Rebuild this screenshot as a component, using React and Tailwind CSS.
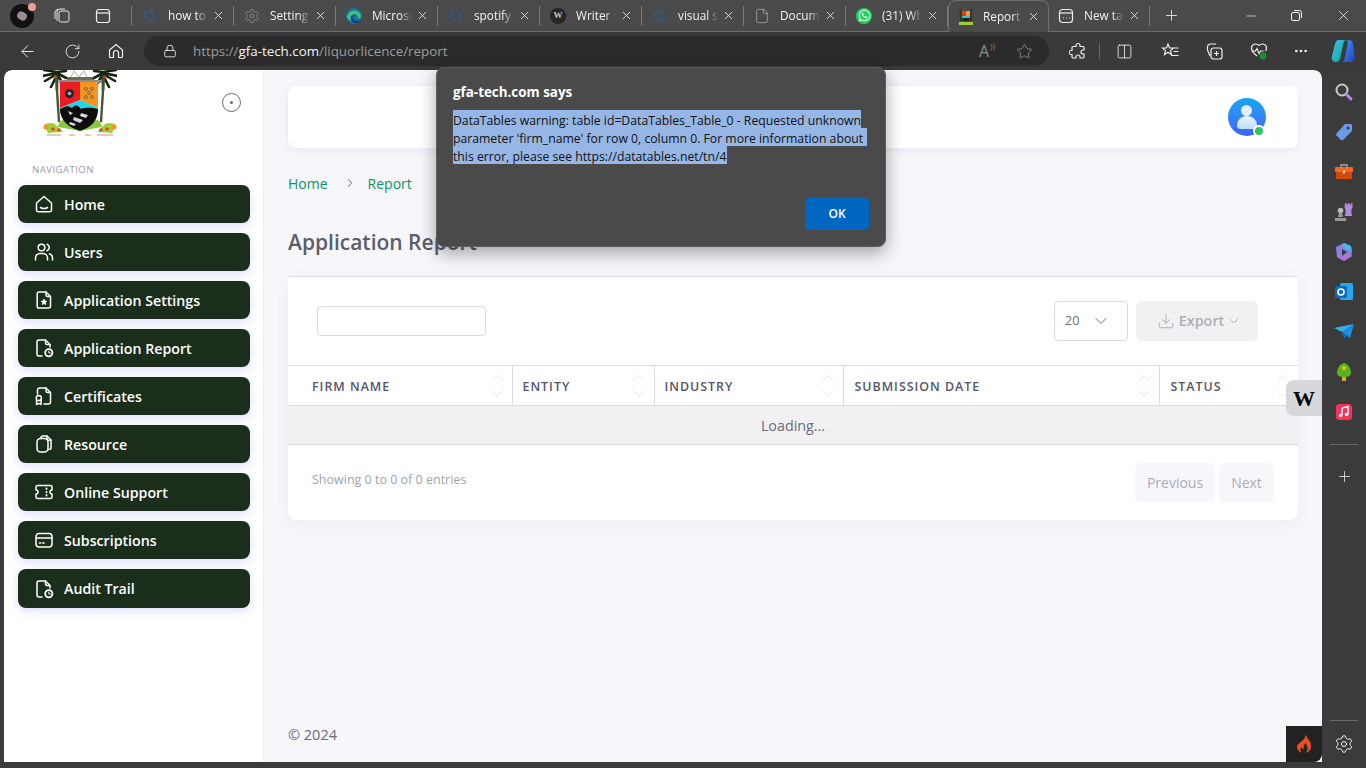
import React from "react";
import {
  ArrowLeft,
  RotateCw,
  Lock,
  Star,
  Columns2,
  X,
  Plus,
  Minus,
  Settings,
  Search,
  File,
  ChevronDown,
  ChevronUp,
  ChevronRight,
  Download,
  MoreHorizontal,
} from "lucide-react";
import { FaWhatsapp } from "react-icons/fa";

const Line = ({ children, size = 20, className = "" }) => (
  <svg
    width={size}
    height={size}
    viewBox="0 0 20 20"
    fill="none"
    stroke="currentColor"
    strokeWidth="1.5"
    strokeLinecap="round"
    strokeLinejoin="round"
    className={className}
  >
    {children}
  </svg>
);

const navIcons = {
  home: (
    <>
      <path d="M2.5 9 10 2.5 17.5 9v7a1.8 1.8 0 0 1-1.8 1.8H4.3A1.8 1.8 0 0 1 2.5 16z" />
      <path d="M6.5 13.5c2 1.2 5 1.2 7 0" />
    </>
  ),
  users: (
    <>
      <circle cx="7.5" cy="5.5" r="3.3" />
      <path d="M1.5 18v-2a4.5 4.5 0 0 1 4.5-4.5h3a4.5 4.5 0 0 1 4.5 4.5v2" />
      <path d="M13 2.3a3.4 3.4 0 0 1 0 6.4" />
      <path d="M15.5 11.8a4.3 4.3 0 0 1 3 4.2v2" />
    </>
  ),
  settings: (
    <>
      <path d="M5 2h7l4.5 4.5V16a2 2 0 0 1-2 2H5a1.8 1.8 0 0 1-1.8-1.8V3.8A1.8 1.8 0 0 1 5 2z" />
      <path d="M12 2v3a1.5 1.5 0 0 0 1.5 1.5h3" />
      <path d="m10 9.3.9 1.7 1.9.3-1.4 1.3.4 1.9-1.8-.9-1.8.9.4-1.9-1.4-1.3 1.9-.3z" fill="currentColor" strokeWidth="0.8" />
    </>
  ),
  report: (
    <>
      <path d="M8 18H5a2 2 0 0 1-2-2V4a2 2 0 0 1 2-2h6.5L16 6.5V9" />
      <path d="M11.5 2v3A1.5 1.5 0 0 0 13 6.5h3" />
      <circle cx="14.8" cy="14.8" r="3.6" strokeWidth="1.8" />
      <path d="M14.8 13.2v1.8h1.6" strokeWidth="1" />
    </>
  ),
  cert: (
    <>
      <path d="M3.5 8V4a2 2 0 0 1 2-2h6.5L16.5 6.5V16a2 2 0 0 1-2 2H10" />
      <path d="M12 2v3a1.5 1.5 0 0 0 1.5 1.5h3" />
      <circle cx="4.8" cy="12" r="2.6" />
      <path d="M2.5 14.5V18.5l2.3-1.2 2.3 1.2v-4" />
    </>
  ),
  copy: (
    <>
      <path d="M7 4.5V4a2 2 0 0 1 2-2h4l4 4v7.5a2 2 0 0 1-2 2h-1" />
      <path d="M13 2v3a1.2 1.2 0 0 0 1.2 1.2H17" />
      <rect x="3" y="4.5" width="11" height="13.5" rx="3.5" />
    </>
  ),
  ticket: (
    <>
      <path d="M3.5 3.5h13a1.5 1.5 0 0 1 1.5 1.5v3a2 2 0 0 0 0 4v3a1.5 1.5 0 0 1-1.5 1.5h-13A1.5 1.5 0 0 1 2 15v-3a2 2 0 0 0 0-4V5a1.5 1.5 0 0 1 1.5-1.5z" />
      <path d="M12.5 6.5v.5M12.5 9.8v.5M12.5 13v.5" strokeWidth="1.8" />
    </>
  ),
  card: (
    <>
      <rect x="2" y="3.5" width="16" height="13.5" rx="3" />
      <path d="M2 8h16" />
      <path d="M5.5 13h1.2M8.8 13H10" strokeWidth="1.6" />
    </>
  ),
};

const navItems = [
  ["Home", "home"],
  ["Users", "users"],
  ["Application Settings", "settings"],
  ["Application Report", "report"],
  ["Certificates", "cert"],
  ["Resource", "copy"],
  ["Online Support", "ticket"],
  ["Subscriptions", "card"],
  ["Audit Trail", "report"],
];

const EdgeIcon = () => (
  <svg width="16" height="16" viewBox="0 0 16 16">
    <circle cx="8" cy="8" r="8" fill="#1b6fa8" />
    <path d="M1 9c1-5 5-7 8-6.500 3 .5 6 3 6 6 0 1.500-2 2-3.500 1.500C13 8 10 5.500 7 6.500 4.500 7.300 4 10 5.500 12.500 3 12.500 1.500 11 1 9z" fill="#3ec27c" />
    <path d="M5 8.500c-1 3 1.500 7 6 6.500 1.500-.3 3-1.500 4-3-2 1.500-6 1.500-7.500-.5C6.500 10.500 6 9.500 7 7.500 6 7.500 5.300 7.800 5 8.500z" fill="#0c3f7a" />
  </svg>
);

const WIcon = () => (
  <div className="w-4 h-4 rounded-full bg-[#262626] flex items-center justify-center text-[9px] font-bold text-[#c8c8c8] [font-family:'Liberation_Serif',serif]">
    W
  </div>
);

const MiniCrest = () => (
  <svg width="16" height="18" viewBox="0 0 16 18">
    <path d="M2 1c1 1 1 3 1 12M14 1c-1 1-1 3-1 12" stroke="#2c3a1e" strokeWidth="2" />
    <path d="M4 3h4v5H4z" fill="#e5332a" />
    <path d="M8 3h4v5H8z" fill="#f3982b" />
    <path d="M4 8h8v2l-4 3-4-3z" fill="#27c6d8" />
    <path d="M4 10h8l-1 3H5z" fill="#222" />
    <path d="M1 14h14v3H1z" fill="#9acb3c" />
  </svg>
);

const tabs = [
  { title: "how to", icon: <Search size={14} className="text-[#2c5d8f]" strokeWidth={2.4} /> },
  { title: "Settings", icon: <Settings size={16} className="text-[#8c8c8c]" strokeWidth={1.4} /> },
  { title: "Microsoft", icon: <EdgeIcon /> },
  { title: "spotify", icon: <Search size={14} className="text-[#2c5d8f]" strokeWidth={2.4} /> },
  { title: "Writer C", icon: <WIcon /> },
  { title: "visual st", icon: <Search size={14} className="text-[#2c5d8f]" strokeWidth={2.4} /> },
  { title: "Document", icon: <File size={16} className="text-[#a8a8a8]" strokeWidth={1.2} /> },
  { title: "(31) What", icon: <div className="w-4 h-4 rounded-full bg-[#1fd15f] flex items-center justify-center text-white"><FaWhatsapp size={13} /></div> },
];

const Tab = ({ title, icon, active, narrow }) => (
  <div
    className={`h-[32px] flex items-center shrink-0 relative ${
      active
        ? "w-[101px] pl-[9px] border border-b-0 border-[#6e6e6e] rounded-t-lg bg-[#4a4a4a] z-10"
        : narrow
        ? "w-[101px] pl-[9px] border-b border-[#6e6e6e]"
        : "w-[102px] pl-[10px] border-b border-[#6e6e6e]"
    }`}
  >
    <div className="w-4 flex justify-center shrink-0">{icon}</div>
    <div
      className={`${active ? "ml-[9px]" : "ml-[10px]"} w-[40px] pt-[1px] overflow-hidden whitespace-nowrap text-[11.8px] text-[#f2f2f2] [mask-image:linear-gradient(90deg,#000_72%,transparent)]`}
    >
      {title}
    </div>
    <X size={13} strokeWidth={1.5} className="ml-[4px] text-[#f0f0f0] shrink-0" />
    {!active && <div className="absolute right-0 top-[6px] h-[20px] w-px bg-[#7b7b7b]" />}
  </div>
);

const TopBars = () => (
  <>
    <div className="h-[32px] bg-[#4a4a4a] flex items-stretch shrink-0">
      <div className="w-[132px] flex items-center border-b border-[#6e6e6e] shrink-0 relative">
        <div className="ml-[10px] w-[24px] h-[24px] rounded-full bg-[#111] relative flex items-center justify-center">
          <div className="w-[10px] h-[8px] rounded-sm bg-[#9a8f8f] rotate-[30deg]" />
          <div className="absolute -top-[1px] -right-[2px] w-[8px] h-[8px] rounded-full bg-[#f29b9b]" />
        </div>
        <svg width="18" height="18" viewBox="0 0 18 18" fill="none" stroke="#e6e6e6" strokeWidth="1" className="ml-[19px]">
          <rect x="6" y="4" width="10" height="11" rx="2" />
          <path d="M4 14V5a3 3 0 0 1 3-3h5M2 12V5a5 5 0 0 1 3-3" />
        </svg>
        <svg width="16" height="16" viewBox="0 0 16 16" fill="none" stroke="#f0f0f0" strokeWidth="1.2" className="ml-[24px]">
          <rect x="1.500" y="1.500" width="13" height="13" rx="2.500" />
          <path d="M1.500 5h13" />
        </svg>
        <div className="absolute right-0 top-[6px] h-[20px] w-px bg-[#7b7b7b]" />
      </div>
      {tabs.map((t) => (
        <Tab key={t.title} {...t} />
      ))}
      <Tab title="Report" active icon={<MiniCrest />} />
      <Tab
        title="New tab"
        narrow
        icon={
          <svg width="16" height="16" viewBox="0 0 16 16" fill="none" stroke="#ececec" strokeWidth="1.2">
            <rect x="1.500" y="1.500" width="13" height="13" rx="3" />
            <path d="M1.500 5h13" />
            <path d="M5 10h.6M8 10h.6M11 10h.6" strokeWidth="1.400" />
          </svg>
        }
      />
      <div className="flex-1 border-b border-[#6e6e6e] flex items-center text-[#f2f2f2]">
        <Plus size={17} strokeWidth={1.2} className="ml-[13px]" />
        <Minus size={14} strokeWidth={1.2} className="ml-[64px]" />
        <svg width="11" height="11" viewBox="0 0 11 11" fill="none" stroke="#f2f2f2" className="ml-[33px]">
          <rect x="0.500" y="2.500" width="8" height="8" rx="1.500" />
          <path d="M3 .5h5.500a2 2 0 0 1 2 2V8" />
        </svg>
        <X size={17} strokeWidth={1.100} className="ml-[33px]" />
      </div>
    </div>

    <div className="h-[38px] bg-[#3a3a3a] flex items-center shrink-0 text-[#f0f0f0]">
      <ArrowLeft size={19} strokeWidth={1.2} className="ml-[18px]" />
      <RotateCw size={17} strokeWidth={1.2} className="ml-[27px]" />
      <svg width="16" height="16" viewBox="0 0 16 16" fill="none" stroke="#f0f0f0" strokeWidth="1.200" className="ml-[27px]">
        <path d="M1.500 7 8 1.500 14.500 7v6.500a1 1 0 0 1-1 1H10.500V10a2.500 2.500 0 0 0-5 0v4.500H2.500a1 1 0 0 1-1-1z" />
      </svg>
      <div className="ml-[20px] w-[905px] h-[30px] rounded-full bg-[#2b2b2b] flex items-center">
        <Lock size={14} strokeWidth={1.500} className="ml-[19px] text-[#ededed]" />
        <div className="ml-[16px] text-[13.35px] text-[#9d9d9d] whitespace-nowrap">
          https://<span className="text-[#f4f4f4]">gfa-tech.com</span>/liquorlicence/report
        </div>
        <div className="ml-auto flex items-center text-[#8d8d8d]">
          <div className="relative text-[16px] leading-none mr-[27px]">
            A<span className="absolute -right-[6px] -top-[1px] text-[8px]">))</span>
          </div>
          <Star size={17} strokeWidth={1.200} className="mr-[16px]" />
        </div>
      </div>
      <svg width="18" height="18" viewBox="0 0 18 18" fill="none" stroke="#f0f0f0" strokeWidth="1.200" className="ml-[20px]">
        <path d="M7 3.500a2 2 0 0 1 4 0V4.500h3a1 1 0 0 1 1 1V8h-1a2 2 0 0 0 0 4h1v3a1 1 0 0 1-1 1h-3v-1a2 2 0 0 0-4 0v1H4a1 1 0 0 1-1-1v-2.500H2a2 2 0 0 1 0-4h1V5.500a1 1 0 0 1 1-1h3z" />
      </svg>
      <div className="ml-[12px] w-px h-[16px] bg-[#666]" />
      <Columns2 size={17} strokeWidth={1.200} className="ml-[16px]" />
      <svg width="18" height="18" viewBox="0 0 18 18" fill="none" stroke="#f0f0f0" strokeWidth="1.100" className="ml-[28px]">
        <path d="M7 2l1.500 4h4L9.500 8.700l1 4-3.500-2.500L3.500 12.700l1-4L1.500 6h4z" />
        <path d="M13 6h4.500M12.500 9.500h5M10 13.500h7.500" />
      </svg>
      <svg width="18" height="18" viewBox="0 0 18 18" fill="none" stroke="#f0f0f0" strokeWidth="1.200" className="ml-[26px]">
        <path d="M5 14 2.500 8V5a3 3 0 0 1 3-3H11" />
        <rect x="6" y="6" width="11" height="11" rx="2.500" />
        <path d="M11.500 9v5M9 11.500h5" />
      </svg>
      <svg width="18" height="18" viewBox="0 0 18 18" fill="none" className="ml-[27px]">
        <path d="M9 3.500C6 .5 1.500 2.500 1.500 6c0 3 3 6 5.500 8M9 3.500c3-3 7.500-1 7.500 2.500 0 1-.3 2-1 3" stroke="#f0f0f0" strokeWidth="1.200" />
        <path d="M1.500 9h4l1.500-2.500 2 5L10.500 9h3" stroke="#f0f0f0" strokeWidth="1.100" />
        <circle cx="13" cy="14" r="3.500" fill="#1a8f3c" />
      </svg>
      <MoreHorizontal size={16} className="ml-[25px]" strokeWidth={2} />
      <svg width="24" height="24" viewBox="0 0 24 24" className="ml-[22px]">
        <defs>
          <linearGradient id="cop1" x1="0" y1="0" x2="1" y2="1">
            <stop offset="0" stopColor="#35c5ea" />
            <stop offset="1" stopColor="#1c9f8e" />
          </linearGradient>
          <linearGradient id="cop2" x1="0" y1="0" x2="1" y2="1">
            <stop offset="0" stopColor="#3fa0f5" />
            <stop offset="1" stopColor="#2440c8" />
          </linearGradient>
        </defs>
        <path d="M8 1h8c-2 0-3 1-3.500 3L9 20c-.5 2-2 3-4 3-3 0-5-3-4-6l3-12c.5-2.500 2-4 4-4z" fill="url(#cop1)" />
        <path d="M16 1h2c2 0 3.500 1.500 4 4l1.500 12c.5 3-1 6-3.500 6h-10c2 0 3-1 3.500-3l3-14c.3-2 .5-3-.5-5z" fill="url(#cop2)" />
      </svg>
    </div>
  </>
);

const Palm = ({ x, flip }) => (
  <g transform={`translate(${x} 0) scale(${flip ? -1 : 1} 1)`}>
    <path d="M0 2-13 0M0 3-15 6M0 4-12 11M0 5-6 17M0 5 0 20M0 4 6 14M0 3 9 8M0 2 9 1" stroke="#17240f" strokeWidth="2.600" strokeLinecap="round" />
    <path d="M-1 5 2 52" stroke="#4a5638" strokeWidth="2.400" />
    <circle cx="-2" cy="7" r="1.500" fill={flip ? "#d0342c" : "#a85a20"} />
  </g>
);

const Crest = () => (
  <svg width="74" height="66" viewBox="0 0 74 66">
    <path d="M27 9 31 1l5 6 5-6 4 8" fill="none" stroke="#c4c4c4" strokeWidth="1.200" />
    <path d="M24 7h27v3H24z" fill="#6b6b55" />
    <Palm x={14} />
    <Palm x={60} flip />
    <path d="M15 57c1-6 5-9 10-7l12 6 12-6c5-2 9 1 10 7l-22 4z" fill="#8dc63f" />
    <path d="M16 10h43v3H16z" fill="#8b8b8b" />
    <path d="M17 12h20v18l-20 8z" fill="#ed1c24" />
    <path d="M37 12h18v26l-18-8z" fill="#f7941d" />
    <circle cx="26.500" cy="23.500" r="4.500" fill="#222" />
    <circle cx="26.500" cy="23.500" r="1.800" fill="#aaa" />
    <g fill="none" stroke="#7a6a4a" strokeWidth="1">
      <circle cx="43" cy="19" r="1.500" />
      <circle cx="49" cy="19" r="1.500" />
      <circle cx="46" cy="23" r="1.500" />
      <circle cx="43" cy="27" r="1.500" />
      <circle cx="49" cy="27" r="1.500" />
    </g>
    <path d="M37 30 55 38v5H17v-5z" fill="#1fd6e6" />
    <path d="M17 39c6-3 8-4 12-1 3-4 6-3 9 1 5-2 12-1 17 0 0 11-6 18-18 22-12-4-20-11-20-22z" fill="#0d0d0d" />
    <path d="M25 41l5 2-3 2zM31 47l9 3-3 3-7-3zM38 43l7 2-2 3-6-2zM27 52l6 2-2 2-5-2z" fill="#d8d8d8" />
    <path d="M1 55c3-2 7-3 11-1l8 8-15 1zM73 55c-3-2-7-3-11-1l-8 8 15 1z" fill="#9ad13a" />
    <g fill="#e8402a">
      <circle cx="10" cy="59" r="1.700" />
      <circle cx="16" cy="60" r="1.700" />
      <circle cx="58" cy="60" r="1.700" />
      <circle cx="64" cy="59" r="1.700" />
    </g>
    <circle cx="3" cy="57" r="2.600" fill="#f7941d" />
    <circle cx="71" cy="57" r="2.600" fill="#f7941d" />
    <path d="M4 65h14M26 65h6M42 65h6M54 65h16" stroke="#e4b4b4" strokeWidth="1.600" />
  </svg>
);

const Sidebar = () => (
  <aside className="w-[260px] bg-white border-r border-[#eeeef3] rounded-tl-lg shrink-0">
    <div className="h-[90px] relative">
      <div className="pl-[39px]">
        <Crest />
      </div>
      <div className="absolute left-[218px] top-[23px] w-[19px] h-[19px] rounded-full border-[1.5px] border-[#6a6a78] flex items-center justify-center">
        <div className="w-[3px] h-[3px] rounded-full bg-[#6a6a78]" />
      </div>
    </div>
    <div className="h-[18px] pl-[28px] text-[9.7px] leading-[20px] tracking-[0.4px] text-[#9a9aa6]">NAVIGATION</div>
    <nav className="mt-[7px] ml-[14px] mr-[13px] flex flex-col gap-[10px]">
      {navItems.map(([label, icon]) => (
        <div
          key={label}
          className="h-[38px] last:h-[39px] rounded-lg bg-[#1a2e1b] flex items-center pl-[16px] text-white text-[14.2px] font-semibold shadow-[0_3px_8px_rgba(99,102,241,0.22)]"
        >
          <Line>{navIcons[icon]}</Line>
          <span className="ml-[10px] pt-[1px] whitespace-nowrap">{label}</span>
        </div>
      ))}
    </nav>
  </aside>
);

const Sort = () => (
  <div className="h-[36px] flex flex-col items-center justify-center text-[#e4e4e8]">
    <ChevronUp size={20} strokeWidth={1.100} />
    <ChevronDown size={20} strokeWidth={1.100} className="-mt-[4px]" />
  </div>
);

const columns = [
  ["Firm Name", "w-[224px]", "pl-[24px] pr-[5px]"],
  ["Entity", "w-[142px]", "pl-[10px] pr-[5px]"],
  ["Industry", "w-[189px]", "pl-[10px] pr-[5px]"],
  ["Submission Date", "w-[316px]", "pl-[11px] pr-[5px]"],
  ["Status", "w-[139px]", "pl-[11px] pr-[5px]"],
];

const ReportCard = () => (
  <div className="mt-[19px] bg-white rounded-b-lg border-t border-[#e0e0e5] shadow-[0_4px_14px_rgba(120,120,170,0.08)]">
    <div className="h-[88px] pl-[29px] pr-[40px] flex items-center">
      <input className="w-[169px] h-[30px] rounded-[4px] border border-[#d9d9de] bg-white" />
      <div className="ml-auto w-[74px] h-[40px] rounded-[4px] border border-[#d9d9de] flex items-center pl-[10px] text-[12.5px] text-[#6c6c7a]">
        20
        <ChevronDown size={20} strokeWidth={1.200} className="ml-[12px]" />
      </div>
      <button className="ml-[8px] w-[122px] h-[40px] pl-[5px] rounded-md bg-[#f1f1f3] flex items-center justify-center text-[14.4px] font-semibold text-[#adadb6]">
        <Download size={18} strokeWidth={1.300} className="mr-[4px]" />
        Export
        <ChevronDown size={16} strokeWidth={1.200} className="ml-[2px]" />
      </button>
    </div>
    <table className="w-full table-fixed border-collapse">
      <thead>
        <tr className="h-[40px] border-y border-[#dcdce0]">
          {columns.map(([name, width, pad], i) => (
            <th
              key={name}
              className={`${width} ${pad} p-0 ${i < 4 ? "border-r border-[#dcdce0]" : ""}`}
            >
              <div className="flex items-center justify-between">
                <span className="pt-[4px] text-[12.4px] font-semibold uppercase tracking-[1px] text-[#55556a] whitespace-nowrap">
                  {name}
                </span>
                <Sort />
              </div>
            </th>
          ))}
        </tr>
      </thead>
      <tbody>
        <tr className="h-[39px] bg-[#f1f1f3] border-b border-[#dcdce0]">
          <td colSpan={5} className="pt-[2px] text-center text-[14.3px] text-[#6c6c7a]">
            Loading...
          </td>
        </tr>
      </tbody>
    </table>
    <div className="h-[75px] px-[24px] pt-[18px] flex justify-between items-start">
      <div className="mt-[8px] text-[12.5px] text-[#a2a2ad]">Showing 0 to 0 of 0 entries</div>
      <div className="flex gap-[4px]">
        <div className="w-[80px] h-[39px] rounded-md bg-[#f6f6fb] flex items-center justify-center text-[14px] text-[#adadb8]">Previous</div>
        <div className="w-[55px] h-[39px] rounded-md bg-[#f6f6fb] flex items-center justify-center text-[14px] text-[#adadb8]">Next</div>
      </div>
    </div>
  </div>
);

const Main = () => (
  <main className="flex-1 bg-[#f6f6fb] px-[24px] pt-[16px] flex flex-col min-w-0 rounded-tr-lg">
    <div className="h-[62px] bg-white rounded-lg shadow-[0_2px_8px_rgba(120,120,170,0.12)] flex items-center justify-end pr-[32px] shrink-0">
      <div className="w-[38px] h-[38px] rounded-full bg-gradient-to-b from-[#12a5fb] to-[#3f63f2] relative overflow-visible">
        <div className="absolute left-[13px] top-[7px] w-[11px] h-[11px] rounded-full bg-[#dff0fd]" />
        <div className="absolute left-[9px] top-[18px] w-[20px] h-[13px] rounded-t-[10px] rounded-b-[4px] bg-gradient-to-b from-[#eef7fe] to-[#b9dcfb]" />
        <div className="absolute left-[25px] top-[27px] w-[12px] h-[12px] rounded-full bg-[#2cc46b] border-2 border-white" />
      </div>
    </div>
    <div className="mt-[23px] h-[24px] flex items-center text-[14px] text-[#0b9560]">
      <span>Home</span>
      <ChevronRight size={14} strokeWidth={1.500} className="ml-[15px] mr-[11px] text-[#55556a]" />
      <span>Report</span>
    </div>
    <h1 className="mt-[32px] h-[30px] text-[21px] leading-[30px] font-semibold text-[#5c5c6b]">Application Report</h1>
    <ReportCard />
    <div className="mt-auto mb-[17px] h-[20px] text-[14.5px] leading-[20px] text-[#6c6c7a]">© 2024</div>
  </main>
);

const panelIcons = [
  <svg key="s" width="20" height="20" viewBox="0 0 20 20" fill="none">
    <circle cx="8" cy="8" r="5.500" stroke="#c9c9c9" strokeWidth="2" />
    <path d="M12.500 12.500 17 17" stroke="#b68ae6" strokeWidth="3" strokeLinecap="round" />
  </svg>,
  <svg key="t" width="20" height="20" viewBox="0 0 20 20">
    <path d="M11 2h6a1 1 0 0 1 1 1v6l-9 9a1.500 1.500 0 0 1-2 0L2.500 13.500a1.500 1.500 0 0 1 0-2z" fill="#6a9be6" />
    <circle cx="14" cy="6" r="1.500" fill="#263a5e" />
  </svg>,
  <svg key="b" width="20" height="20" viewBox="0 0 20 20">
    <path d="M7 5V3h6v2" fill="none" stroke="#a8a8a8" strokeWidth="1.400" />
    <rect x="1" y="5" width="18" height="5" rx="1" fill="#f26a21" />
    <rect x="2" y="10" width="16" height="7" rx="1" fill="#d4470f" />
    <rect x="9" y="8.500" width="2" height="3" fill="#e8d8c8" />
  </svg>,
  <svg key="c" width="20" height="20" viewBox="0 0 20 20">
    <circle cx="6.500" cy="8.500" r="2.800" fill="#b8b8b8" />
    <path d="M5 11h3l1 4H4zM1 16h11v3H1z" fill="#999" />
    <path d="M11 1h1.500v1.500H14V1h1.500v1.500H17V1h1.500v5l-1 1v5l1 2h-8l1-2V7l-1-1z" fill="#b48ae0" />
  </svg>,
  <svg key="co" width="20" height="20" viewBox="0 0 20 20">
    <path d="M10 1 17 4 18 14 10 19 3 15 2 5z" fill="#8b7fe0" />
    <path d="M10 1l7 3 1 6-7-3-3-3z" fill="#4cb6e8" />
    <path d="M8 7l5 3-5 4z" fill="#3b3b3b" />
    <path d="M3 15l5-1 5-1 5 1-8 5z" fill="#a879d8" />
  </svg>,
  <svg key="o" width="20" height="20" viewBox="0 0 20 20">
    <rect x="6" y="1" width="13" height="17" rx="1.500" fill="#28a8ea" />
    <rect x="1" y="4" width="12" height="12" rx="1.500" fill="#0f6cbd" />
    <circle cx="7" cy="10" r="3" fill="none" stroke="#fff" strokeWidth="1.600" />
  </svg>,
  <svg key="p" width="20" height="20" viewBox="0 0 20 20">
    <path d="M0 6 20 2 8 10z" fill="#2fb4f0" />
    <path d="M20 2 8 10l8 6z" fill="#1a8fe0" />
    <path d="M8 10l2 7 3-3z" fill="#0f6cbd" />
  </svg>,
  <svg key="tr" width="20" height="20" viewBox="0 0 20 20">
    <path d="M10 1c4 1 7 5 7 10 0 3-3 4-7 4s-7-1-7-4c0-5 3-9 7-10z" fill="#5cb31e" />
    <path d="M8 15h4v4H8z" fill="#f0a010" />
    <circle cx="10" cy="6" r="2" fill="#f0c020" />
  </svg>,
  <svg key="m" width="20" height="20" viewBox="0 0 20 20">
    <rect x="2" y="2" width="16" height="16" rx="3.500" fill="#fa3158" />
    <path d="M8 13V6l6-1.500V12" fill="none" stroke="#fff" strokeWidth="1.500" />
    <circle cx="6.500" cy="13.500" r="1.800" fill="#fff" />
    <circle cx="12.500" cy="12.500" r="1.800" fill="#fff" />
  </svg>,
];

const SidePanel = () => (
  <div className="w-[44px] shrink-0 bg-[#3b3b3b] flex flex-col items-center pt-[12px]">
    <div className="flex flex-col gap-[20px]">{panelIcons}</div>
    <div className="mt-[22px] w-[28px] h-px bg-[#666]" />
    <Plus size={17} strokeWidth={1.100} className="mt-[23px] text-[#f0f0f0]" />
    <div className="mt-auto w-[28px] h-px bg-[#666] mb-[13px]" />
    <Settings size={20} strokeWidth={1.200} className="text-[#f0f0f0] mb-[14px]" />
  </div>
);

const Dialog = () => (
  <div className="absolute left-[436px] top-[67px] w-[450px] h-[180px] rounded-lg bg-[#4a4a4a] border border-[#5e5e5e] shadow-[0_6px_18px_rgba(0,0,0,0.35)] px-[16px] z-20">
    <div className="mt-[14px] h-[20px] text-[13.4px] leading-[20px] font-bold text-white">gfa-tech.com says</div>
    <div className="mt-[8px] text-[12.23px] text-[#111]">
      <div className="h-[18px] leading-[22px] w-[408px] bg-[#96b7e6] whitespace-nowrap">DataTables warning: table id=DataTables_Table_0 - Requested unknown</div>
      <div className="h-[18px] leading-[22px] w-[414px] bg-[#96b7e6] whitespace-nowrap">parameter 'firm_name' for row 0, column 0. For more information about</div>
      <div className="h-[18px] leading-[22px] w-[274px] bg-[#96b7e6] whitespace-nowrap">this error, please see https://datatables.net/tn/4</div>
    </div>
    <button className="absolute left-[368px] top-[130px] w-[64px] h-[32px] rounded-[4px] bg-[#0067c0] text-white text-[12px] font-semibold">
      OK
    </button>
  </div>
);

const App = () => (
  <div className="w-[1366px] h-[768px] bg-[#3b3b3b] flex flex-col overflow-hidden relative [font-family:'Open_Sans','Noto_Sans',sans-serif]">
    <TopBars />
    <div className="flex-1 flex min-h-0">
      <div className="w-[4px] shrink-0" />
      <div className="flex-1 flex min-w-0 rounded-t-lg overflow-hidden mb-[6px]">
        <Sidebar />
        <Main />
      </div>
      <SidePanel />
    </div>
    <Dialog />
    {/* floating writer button + codeigniter badge sit over the page */}
    <div className="absolute left-[1286px] top-[380px] w-[36px] h-[36px] rounded-l-lg bg-[#d6d8dc] flex items-center justify-center text-[22px] font-bold text-black [font-family:'Liberation_Serif',serif] z-10">
      W
    </div>
    <div className="absolute left-[1286px] top-[726px] w-[36px] h-[36px] rounded-br-lg bg-[#222] flex items-center justify-center z-10">
      <svg width="16" height="20" viewBox="0 0 16 20">
        <path d="M9 0c1 3-1 5-3 7S1 10 1 13c0 3 2 5 5 6-2-2-2-4-.5-6 .5 1.500 1.500 2 2.500 2.500C7 13 8 10 10 9c0 2 2 3 1.500 6 0 1-1 3-2 4 3-1 5.500-3 5.500-7 0-5-4-8-6-12z" fill="#e8501f" />
      </svg>
    </div>
  </div>
);

export default App;
